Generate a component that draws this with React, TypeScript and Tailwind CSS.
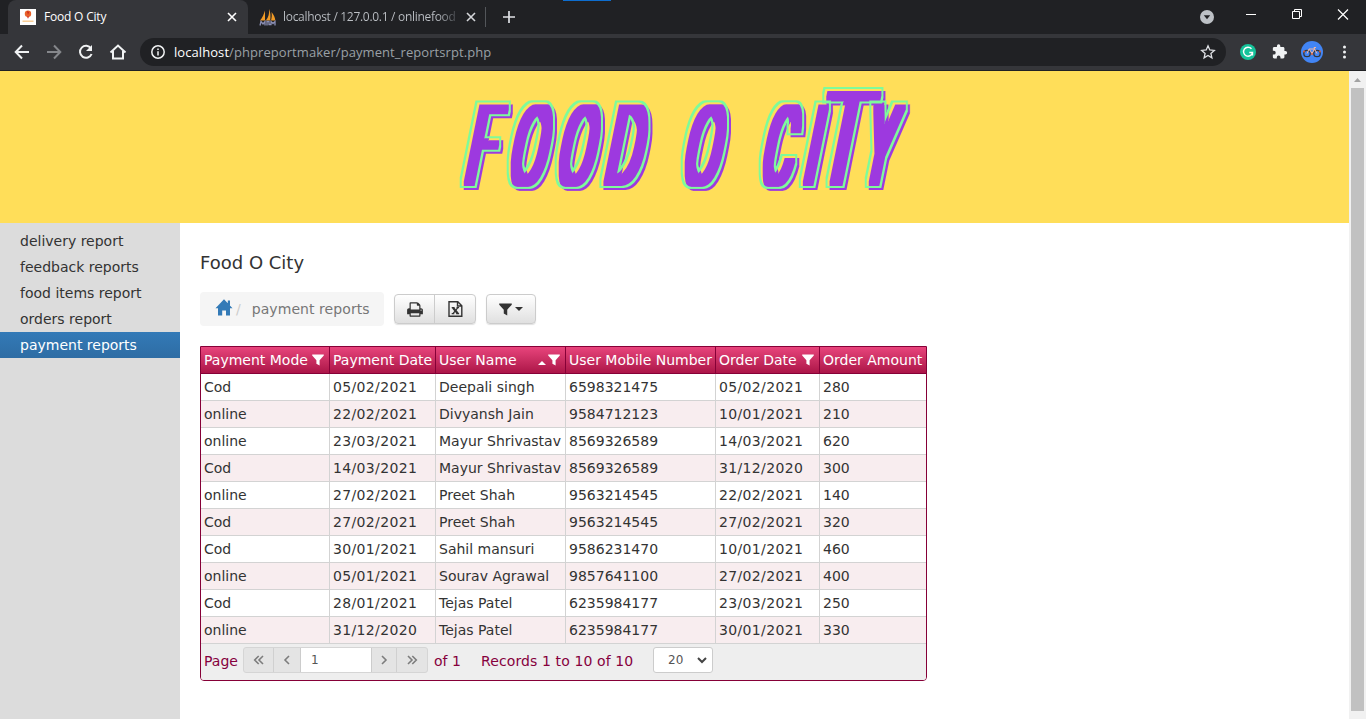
import React from "react";

const columns = [
  { label: "Payment Mode", w: "w-[129px]", filter: true },
  { label: "Payment Date", w: "w-[106px]", date: true },
  { label: "User Name", w: "w-[130px]", filter: true, sorted: true },
  { label: "User Mobile Number", w: "w-[150px]" },
  { label: "Order Date", w: "w-[104px]", filter: true, date: true },
  { label: "Order Amount", w: "w-[106px]" },
];

const rows = [
  ["Cod", "05/02/2021", "Deepali singh", "6598321475", "05/02/2021", "280"],
  ["online", "22/02/2021", "Divyansh Jain", "9584712123", "10/01/2021", "210"],
  ["online", "23/03/2021", "Mayur Shrivastav", "8569326589", "14/03/2021", "620"],
  ["Cod", "14/03/2021", "Mayur Shrivastav", "8569326589", "31/12/2020", "300"],
  ["online", "27/02/2021", "Preet Shah", "9563214545", "22/02/2021", "140"],
  ["Cod", "27/02/2021", "Preet Shah", "9563214545", "27/02/2021", "320"],
  ["Cod", "30/01/2021", "Sahil mansuri", "9586231470", "10/01/2021", "460"],
  ["online", "05/01/2021", "Sourav Agrawal", "9857641100", "27/02/2021", "400"],
  ["Cod", "28/01/2021", "Tejas Patel", "6235984177", "23/03/2021", "250"],
  ["online", "31/12/2020", "Tejas Patel", "6235984177", "30/01/2021", "330"],
];

const menu = ["delivery report", "feedback reports", "food items report", "orders report", "payment reports"];

function Funnel({ className = "" }: { className?: string }) {
  return (
    <svg className={className} width="12" height="12" viewBox="0 0 12 12" fill="currentColor">
      <path d="M0.200 0.500h11.600v1L7.600 6.200v5.300L4.400 9.800V6.200L0.200 1.500z" />
    </svg>
  );
}

function Chevrons({ double, left }: { double?: boolean; left?: boolean }) {
  return (
    <svg
      width="12"
      height="10"
      viewBox="0 0 12 10"
      fill="none"
      stroke="#7d7d7d"
      strokeWidth="1.6"
      className={left ? "-scale-x-100" : ""}
    >
      {double ? <path d="M2 1l4 4-4 4M6.3 1l4 4-4 4" /> : <path d="M4 1l4 4-4 4" />}
    </svg>
  );
}

const letters = [
  { ch: "F", x: 479, sx: 0.45, size: 109 },
  { ch: "O", x: 526, sx: 0.48, size: 108 },
  { ch: "O", x: 574, sx: 0.48, size: 108 },
  { ch: "D", x: 622, sx: 0.49, size: 109 },
  { ch: "O", x: 700, sx: 0.48, size: 108 },
  { ch: "C", x: 776, sx: 0.43, size: 108 },
  { ch: "I", x: 810, sx: 0.4, size: 109 },
  { ch: "T", x: 838, sx: 0.66, size: 128 },
  { ch: "Y", x: 876, sx: 0.4, size: 109 },
];

function Glyph({ letter, dx, y }: { letter: (typeof letters)[number]; dx: number; y: number }) {
  return (
    <text
      transform={`translate(${letter.x + dx} ${y}) skewX(-11.5) scale(${letter.sx} 1)`}
      fontFamily="Roboto, sans-serif"
      fontWeight="300"
      fontSize={letter.size}
      textAnchor="middle"
    >
      {letter.ch}
    </text>
  );
}

function Banner() {
  return (
    <svg width="1349" height="152" viewBox="0 0 1349 152" className="block" role="img" aria-label="Food O City">
      <defs>
        <filter id="body" filterUnits="userSpaceOnUse" x="440" y="0" width="500" height="152" colorInterpolationFilters="sRGB">
          <feMorphology in="SourceAlpha" operator="dilate" radius="6 4" result="d" />
          <feFlood floodColor="#9d39df" />
          <feComposite in2="d" operator="in" />
        </filter>
        <filter id="outline" filterUnits="userSpaceOnUse" x="440" y="0" width="500" height="152" colorInterpolationFilters="sRGB">
          <feMorphology in="SourceAlpha" operator="dilate" radius="7 5" result="outer" />
          <feMorphology in="SourceAlpha" operator="dilate" radius="5 3" result="inner" />
          <feComposite in="outer" in2="inner" operator="out" result="ring" />
          <feFlood floodColor="#7dfb9b" />
          <feComposite in2="ring" operator="in" />
        </filter>
      </defs>
      <g filter="url(#body)">
        {letters.map((l, i) => (
          <Glyph key={i} letter={l} dx={0} y={115} />
        ))}
      </g>
      {letters.map((l, i) => (
        <g key={i} filter="url(#outline)" aria-hidden="true">
          <Glyph letter={l} dx={-3} y={112} />
        </g>
      ))}
    </svg>
  );
}

function BrowserBar() {
  return (
    <header className="h-[71px] shrink-0 bg-[#202124] font-['Open_Sans','Noto_Sans',sans-serif] text-[12px] text-white">
      <div className="relative flex h-[34px]">
        <div className="ml-2 flex h-[34px] w-[240px] items-center rounded-t-lg bg-[#35363a] pl-3 pr-[10px]">
          <svg width="16" height="16" viewBox="0 0 16 16" className="shrink-0">
            <path fill="#fff" d="M0 0h16v16H0z" />
            <circle cx="8" cy="4.7" r="3.2" fill="#e8622a" />
            <path d="M7 7.5h2l-1 2.3zM7 2l2 1-1 3z" fill="#c8201c" />
            <path d="M2.5 12.2h11" stroke="#f9c98c" strokeWidth="1.4" />
          </svg>
          <span className="ml-2 grow tracking-[-0.2px]">Food O City</span>
          <svg width="12" height="12" viewBox="0 0 12 12" stroke="#fff" strokeWidth="1.6">
            <path d="M2 2l8 8M10 2l-8 8" />
          </svg>
        </div>
        <div className="flex h-[34px] w-[239px] items-center border-0 pl-[11px]">
          <svg width="17" height="17" viewBox="0 0 17 17" className="shrink-0">
            <path d="M6 1.500C5 5 3.500 8.500 1 11.500h5zM10 0C10.500 5 9.500 8 6.800 11.500h4.400c.6-4 .4-8-1.200-11.500zM12.500 3c2.500 3 3.500 5.500 3.800 8.500h-4.300c.8-3 1-5.500.5-8.500z" fill="#f09a26" />
            <path d="M1 16.500l1-4 2 2.500 2-2.500v4M8 16.500v-4h2v3h2v-3l2 2 2-2v4" fill="none" stroke="#8b8fb5" strokeWidth="1.300" />
          </svg>
          <span className="ml-[7px] w-[176px] whitespace-nowrap bg-linear-to-r from-[#bdc1c6] from-88% to-[#33363a] bg-clip-text tracking-[-0.300px] text-transparent">
            localhost / 127.0.0.1 / onlinefood
          </span>
          <svg width="12" height="12" viewBox="0 0 12 12" stroke="#d5d7da" strokeWidth="1.6" className="ml-[6px] shrink-0">
            <path d="M2 2l8 8M10 2l-8 8" />
          </svg>
          <div className="ml-[8px] h-5 w-px shrink-0 bg-[#53565a]" />
        </div>
        <svg width="14" height="14" viewBox="0 0 14 14" stroke="#dfe1e5" strokeWidth="1.7" className="ml-[15px] mt-[10px]">
          <path d="M7 1v12M1 7h12" />
        </svg>
        <div className="absolute left-[563px] top-0 h-px w-12 bg-[#0d6dcf]" />
        <svg width="170" height="34" viewBox="-10 0 170 34" className="ml-auto" fill="none" stroke="#fff">
          <circle cx="1" cy="17" r="7" fill="#bdc1c6" stroke="none" />
          <path d="M-2.200 15.200h6.400l-3.200 4z" fill="#202124" stroke="none" />
          <path d="M40 14.500h10" />
          <path d="M86.500 11.500h7v7h-7zM88.500 11.500v-2h7v7h-2" />
          <path d="M132 9.500l10 10M142 9.500l-10 10" strokeWidth="1.2" />
        </svg>
      </div>
      <div className="flex h-[36px] items-center bg-[#35363a]">
        <svg width="140" height="36" viewBox="0 0 140 36" fill="none" stroke="#f1f3f4" strokeWidth="2" className="shrink-0">
          <path d="M29 18H16M22 11.500L15.700 18l6.300 6.500" />
          <path d="M47 18h13M54 11.500l6.300 6.500-6.300 6.500" stroke="#85878b" />
          <path d="M91 14.500a6 6 0 1 0 .6 5.500" />
          <path d="M92 11v6h-6z" fill="#f1f3f4" stroke="none" />
          <path d="M110.500 18.500l7.500-7 7.500 7M113 17v7.500h10V17" />
        </svg>
        <div className="flex h-7 w-[1086px] items-center rounded-full bg-[#202124] pl-[11px] pr-[10px]">
          <svg width="14" height="14" viewBox="0 0 14 14" fill="none" stroke="#f1f3f4" strokeWidth="1.5">
            <circle cx="7" cy="7" r="6.200" />
            <path d="M7 6.200v4.300M7 3.500v1.500" />
          </svg>
          <span className="ml-[9px] grow pt-px text-[13px] tracking-[0.07px] text-[#9aa0a6]">
            <span className="text-white">localhost</span>/phpreportmaker/payment_reportsrpt.php
          </span>
          <svg width="16" height="16" viewBox="0 0 16 16" fill="none" stroke="#dfe1e5" strokeWidth="1.300">
            <path d="M8 1.800l1.800 4.200 4.500.4-3.400 3 1 4.400L8 11.500l-3.900 2.300 1-4.400-3.400-3 4.500-.4z" />
          </svg>
        </div>
        <svg width="140" height="36" viewBox="1 0 140 36" className="shrink-0">
          <circle cx="23" cy="18" r="8" fill="#15c39a" />
          <path d="M26.500 14.800a4.500 4.500 0 1 0 1 3.700h-3.200M27.500 18.500v3" stroke="#fff" strokeWidth="1.400" fill="none" />
          <path
            transform="translate(46.500 9.500) scale(.68)"
            fill="#f1f3f4"
            d="M20.500 11H19V7c0-1.100-.9-2-2-2h-4V3.500a2.500 2.500 0 0 0-5 0V5H4c-1.100 0-2 .9-2 2v3.800h1.500a2.700 2.700 0 0 1 0 5.400H2V20c0 1.100.9 2 2 2h3.800v-1.500a2.700 2.700 0 0 1 5.400 0V22H17c1.100 0 2-.9 2-2v-4h1.500a2.500 2.500 0 0 0 0-5z"
          />
          <circle cx="87" cy="18" r="11" fill="#4285f4" />
          <g fill="none" stroke="#33363b" strokeWidth="1.300">
            <circle cx="82" cy="19.500" r="3.200" />
            <circle cx="92" cy="19.500" r="3.200" />
          </g>
          <path d="M82 19.500l2-4.500 5.500 0 2.500 4.500M84.500 15.500l2.500 4 2.500-4.500-.5-1.500h2" fill="none" stroke="#f2b6a0" />
          <g fill="#e8602c">
            <circle cx="79" cy="17.500" r="0.900" />
            <circle cx="95" cy="17.500" r="0.900" />
            <circle cx="87" cy="20" r="1" />
          </g>
          <g fill="#f1f3f4">
            <circle cx="119.500" cy="13" r="1.500" />
            <circle cx="119.500" cy="18" r="1.500" />
            <circle cx="119.500" cy="23" r="1.500" />
          </g>
        </svg>
      </div>
    </header>
  );
}

function Toolbar() {
  return (
    <div className="mt-[18px] flex h-[34px] items-start">
      <nav className="flex h-[34px] w-[184px] items-center rounded bg-[#f5f5f5] pl-[15px]">
        <svg width="18" height="17" viewBox="0 0 18 17" fill="#337ab7" className="-mt-1">
          <path d="M9 0.300L17.500 9.200H15v7.300h-4V11.500H7.200v5H3V9.200H0.500zM12.800 1.500h2.200v5l-2.200-2z" />
        </svg>
        <span className="ml-[3px] text-[#ccc]">/</span>
        <span className="ml-[11px] whitespace-nowrap tracking-[0.07px] text-[#777]">payment reports</span>
      </nav>
      <div className="ml-[10px] mt-[2px] flex h-[30px] rounded border border-[#ccc] bg-linear-to-b from-white to-[#e0e0e0] text-[#333] shadow-[0_1px_1px_rgba(0,0,0,0.12)]">
        <button className="flex w-[40px] items-center justify-center border-r border-[#ccc]">
          <svg width="16" height="17" viewBox="0 0 1664 1792" fill="currentColor">
            <path d="M384 1536h896v-256h-896v256zM384 896h896v-384h-160q-40 0-68-28t-28-68v-160h-640v640zM1536 960q0-26-19-45t-45-19-45 19-19 45 19 45 45 19 45-19 19-45zM1664 960v416q0 13-9.500 22.500t-22.500 9.500h-224v160q0 40-28 68t-68 28h-960q-40 0-68-28t-28-68v-160h-224q-13 0-22.500-9.500t-9.500-22.500v-416q0-79 56.500-135.500t135.500-56.500h64v-544q0-40 28-68t68-28h672q40 0 88 20t76 48l152 152q28 28 48 76t20 88v256h64q79 0 135.500 56.500t56.500 135.500z" />
          </svg>
        </button>
        <button className="flex w-[40px] items-center justify-center">
          <svg width="15" height="16" viewBox="0 0 15 16" fill="none" stroke="currentColor" strokeWidth="1.400">
            <path d="M1 0.700h8.800l4 4v10.600H1zM9.500 0.800v4.200h4.200" />
            <path d="M5 6.700l4.800 5.800" strokeWidth="2.200" />
            <path d="M9.900 6.700l-4.800 5.800M3.700 6.700h2.800M8.500 6.700h2.600M3.700 12.700h2.600M8.300 12.700h2.800" strokeWidth="1.200" />
          </svg>
        </button>
      </div>
      <button className="ml-[10px] mt-[2px] flex h-[30px] w-[50px] items-center justify-center rounded border border-[#ccc] bg-linear-to-b from-white to-[#e0e0e0] text-[#333] shadow-[0_1px_1px_rgba(0,0,0,0.12)]">
        <Funnel className="h-[13px] w-[13px]" />
        <svg width="8" height="4" viewBox="0 0 8 4" fill="currentColor" className="ml-[3px]">
          <path d="M0 0h8L4 4z" />
        </svg>
      </button>
    </div>
  );
}

function Pager() {
  return (
    <div className="flex h-[36px] items-start bg-[#eee] pl-[3px] pt-[3px] text-[#86003d]">
      <span className="mt-[4px] w-[39px] leading-5">Page</span>
      <div className="flex h-[26px] overflow-hidden rounded-[3px] border border-[#d5d5d5] bg-[#e4e4e4]">
        <span className="flex w-[30px] items-center justify-center border-r border-[#d0d0d0]"><Chevrons double left /></span>
        <span className="flex w-[26px] items-center justify-center"><Chevrons left /></span>
        <span className="-my-px flex w-[72px] items-center border border-[#ccc] bg-white pl-[10px] text-[12px] text-[#555]">1</span>
        <span className="flex w-[25px] items-center justify-center border-r border-[#d0d0d0]"><Chevrons /></span>
        <span className="flex w-[30px] items-center justify-center"><Chevrons double /></span>
      </div>
      <span className="ml-[6px] mt-[4px] w-[47px] leading-5">of 1</span>
      <span className="mt-[4px] w-[172px] whitespace-nowrap leading-5 tracking-[0.11px]">Records 1 to 10 of 10</span>
      <div className="flex h-[26px] w-[60px] items-center rounded-[3px] border border-[#ccc] bg-white pl-[14px] text-[12px] text-[#555]">
        20
        <svg width="10" height="7" viewBox="0 0 10 7" fill="none" stroke="#444" strokeWidth="2" className="ml-[14px]">
          <path d="M1 1l4 4 4-4" />
        </svg>
      </div>
    </div>
  );
}

export default function App() {
  return (
    <div className="flex h-[719px] w-[1366px] flex-col overflow-hidden bg-white font-['Verdana','DejaVu_Sans',sans-serif] text-[14px] text-[#333]">
      <BrowserBar />
      <div className="flex min-h-0 grow">
        <div className="flex w-[1349px] flex-col">
          <div className="h-[152px] shrink-0 bg-[#ffde59]">
            <Banner />
          </div>
          <div className="flex grow">
            <aside className="w-[180px] bg-[#dcdcdc] pt-[5px]">
              {menu.map((m, i) => (
                <div
                  key={m}
                  className={
                    i === 4
                      ? "h-[26px] bg-linear-to-b from-[#337ab7] to-[#2e6da4] pl-5 leading-[26px] text-white"
                      : "h-[26px] pl-5 leading-[26px]"
                  }
                >
                  {m}
                </div>
              ))}
            </aside>
            <main className="pl-5 pt-[28px]">
              <h1 className="h-[23px] text-[18px] leading-6">Food O City</h1>
              <Toolbar />
              <div className="mt-5 w-[727px] overflow-hidden rounded-b border border-[#860037]">
                <div className="flex h-[27px] border-b border-[#860037] bg-linear-to-b from-[#e8447c] to-[#ac1448] text-white">
                  {columns.map((c, i) => (
                    <div
                      key={c.label}
                      className={`${c.w} flex shrink-0 items-center whitespace-nowrap pl-[3px] ${i < 5 ? "border-r border-[#860037]" : ""}`}
                    >
                      <span>{c.label}</span>
                      {c.sorted && (
                        <svg width="8" height="4" viewBox="0 0 8 4" fill="#fff" className="ml-auto mr-[2px] mt-[5px]">
                          <path d="M0 4h8L4 0z" />
                        </svg>
                      )}
                      {c.filter && <Funnel className={c.sorted ? "mr-[5px]" : "ml-auto mr-[5px]"} />}
                    </div>
                  ))}
                </div>
                {rows.map((r, ri) => (
                  <div key={ri} className={`flex h-[27px] border-b border-[#d3d3d3] ${ri % 2 ? "bg-[#f8edef]" : "bg-white"}`}>
                    {r.map((cell, i) => (
                      <div
                        key={i}
                        className={`${columns[i].w} shrink-0 whitespace-nowrap pl-[3px] leading-[26px] ${i < 5 ? "border-r border-[#d3d3d3]" : ""} ${columns[i].date ? "tracking-[0.35px]" : ""}`}
                      >
                        {cell}
                      </div>
                    ))}
                  </div>
                ))}
                <Pager />
              </div>
            </main>
          </div>
        </div>
        <div className="flex w-[17px] flex-col items-center bg-[#f1f1f1]">
          <svg width="17" height="17" viewBox="0 0 17 17" fill="#a3a3a3">
            <path d="M5 11h7L8.500 7z" />
          </svg>
          <div className="h-[623px] w-[13px] bg-[#c1c1c1]" />
        </div>
      </div>
    </div>
  );
}
